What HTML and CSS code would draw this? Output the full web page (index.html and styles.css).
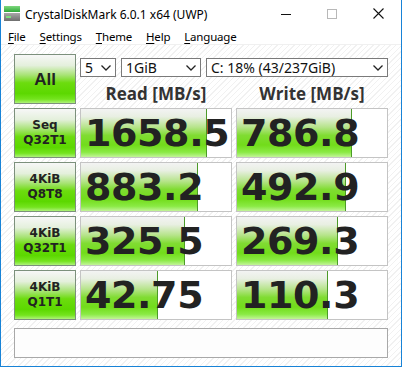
FILE: index.html
```html
<!DOCTYPE html>
<html>
<head>
<meta charset="utf-8">
<link rel="stylesheet" href="styles.css">
</head>
<body>
<div class="window">
  <div class="titlebar">
    <svg class="app-icon" width="16" height="16" viewBox="0 0 16 16">
      <defs>
        <linearGradient id="gtop" x1="0" y1="0" x2="0" y2="1">
          <stop offset="0" stop-color="#7ed87e"/>
          <stop offset="1" stop-color="#2fa83a"/>
        </linearGradient>
        <linearGradient id="gbot" x1="0" y1="0" x2="0" y2="1">
          <stop offset="0" stop-color="#a8a8a8"/>
          <stop offset="1" stop-color="#6e6e6e"/>
        </linearGradient>
      </defs>
      <rect x="0" y="0" width="16" height="6" fill="url(#gtop)"/>
      <rect x="0" y="7" width="16" height="8" fill="url(#gbot)"/>
      <rect x="2" y="10" width="5" height="2" fill="#7ee07e"/>
    </svg>
    <span class="title">CrystalDiskMark 6.0.1 x64 (UWP)</span>
    <div class="caption">
      <div class="cap-btn"><svg width="10" height="10" viewBox="0 0 10 10"><line x1="0" y1="5.5" x2="10" y2="5.5" stroke="#111" stroke-width="1"/></svg></div>
      <div class="cap-btn"><svg width="10" height="10" viewBox="0 0 10 10"><rect x="0.5" y="0.5" width="9" height="9" fill="none" stroke="#b8b8b8" stroke-width="1"/></svg></div>
      <div class="cap-btn"><svg width="11" height="11" viewBox="0 0 11 11"><path d="M0.5 0.5 L10.5 10.5 M10.5 0.5 L0.5 10.5" stroke="#111" stroke-width="1.1"/></svg></div>
    </div>
  </div>
  <div class="menubar">
    <span class="menu"><u>F</u>ile</span>
    <span class="menu"><u>S</u>ettings</span>
    <span class="menu"><u>T</u>heme</span>
    <span class="menu"><u>H</u>elp</span>
    <span class="menu"><u>L</u>anguage</span>
  </div>
  <div class="client">
    <div class="grid">
      <div class="btn btn-all">All</div>
      <div class="top">
        <div class="selects">
          <div class="sel sel-count"><span>5</span><svg class="chev" width="10" height="6" viewBox="0 0 10 6"><polyline points="0.5,0.5 5,5 9.5,0.5" fill="none" stroke="#222" stroke-width="1.3"/></svg></div>
          <div class="sel sel-size"><span>1GiB</span><svg class="chev" width="10" height="6" viewBox="0 0 10 6"><polyline points="0.5,0.5 5,5 9.5,0.5" fill="none" stroke="#222" stroke-width="1.3"/></svg></div>
          <div class="sel sel-drive"><span>C: 18% (43/237GiB)</span><svg class="chev" width="10" height="6" viewBox="0 0 10 6"><polyline points="0.5,0.5 5,5 9.5,0.5" fill="none" stroke="#222" stroke-width="1.3"/></svg></div>
        </div>
        <div class="heads">
          <div class="head">Read [MB/s]</div>
          <div class="head">Write [MB/s]</div>
        </div>
      </div>

      <div class="btn">Seq<br>Q32T1</div>
      <div class="val"><div class="fill" style="width:84%"></div><span class="num">1658.5</span></div>
      <div class="val"><div class="fill" style="width:76.7%"></div><span class="num">786.8</span></div>

      <div class="btn">4KiB<br>Q8T8</div>
      <div class="val"><div class="fill" style="width:78%"></div><span class="num">883.2</span></div>
      <div class="val"><div class="fill" style="width:72.7%"></div><span class="num">492.9</span></div>

      <div class="btn">4KiB<br>Q32T1</div>
      <div class="val"><div class="fill" style="width:69.3%"></div><span class="num">325.5</span></div>
      <div class="val"><div class="fill" style="width:67.3%"></div><span class="num">269.3</span></div>

      <div class="btn">4KiB<br>Q1T1</div>
      <div class="val"><div class="fill" style="width:51.3%"></div><span class="num">42.75</span></div>
      <div class="val"><div class="fill" style="width:60.7%"></div><span class="num">110.3</span></div>
    </div>
    <div class="status"></div>
  </div>
</div>
</body>
</html>
```

FILE: styles.css
```css
* { box-sizing: border-box; }
html, body { margin: 0; padding: 0; background: #fff; }
body { width: 402px; height: 367px; overflow: hidden; font-family: "Noto Sans", "Open Sans", sans-serif; }

.window {
  width: 402px;
  height: 367px;
  border: 1px solid #1883d7;
  border-top: none;
  display: flex;
  flex-direction: column;
  background: #fff;
}

.titlebar {
  height: 27px;
  display: flex;
  align-items: center;
  padding-left: 3px;
  flex: none;
}
.app-icon { flex: none; margin-top: 1px; }
.title {
  margin-left: 5px;
  font-size: 12px;
  color: #000;
  white-space: nowrap;
  margin-top: 1px;
}
.caption { margin-left: auto; display: flex; height: 27px; }
.cap-btn {
  width: 46px;
  height: 27px;
  display: flex;
  align-items: center;
  justify-content: center;
}

.menubar {
  height: 17px;
  display: flex;
  gap: 14px;
  padding-left: 7px;
  align-items: center;
  font-size: 11.5px;
  letter-spacing: -0.2px;
  color: #000;
  border-bottom: 1px solid #f0f0f0;
  flex: none;
  box-sizing: content-box;
}
.menu { white-space: nowrap; line-height: 15px; margin-top: 1px; }
.menu u { text-decoration-thickness: 1px; text-underline-offset: 2px; }

.client {
  flex: 1;
  padding: 9px 13px 0 13px;
  background: repeating-linear-gradient(135deg, #ffffff 0px, #ffffff 3px, #f1f1f1 3px, #f1f1f1 4px);
}

.grid {
  display: grid;
  grid-template-columns: 62px 152px 152px;
  grid-template-rows: repeat(5, 50px);
  column-gap: 4px;
  row-gap: 4px;
}

.btn {
  border: 1px solid #7c907c;
  background: linear-gradient(to bottom, #f7f7f7 0%, #e4f0dc 22%, #a7e374 42%, #6cdc0e 58%, #5cd800 80%, #74e41e 92%, #aef27a 100%);
  display: flex;
  align-items: center;
  justify-content: center;
  text-align: center;
  font-family: "DejaVu Sans", sans-serif;
  font-weight: bold;
  font-size: 12px;
  line-height: 15px;
  color: #222;
}
.btn-all {
  font-family: "Liberation Sans", Arial, sans-serif;
  font-size: 17px;
}

.top {
  grid-column: 2 / 4;
  display: flex;
  flex-direction: column;
}
.selects {
  display: flex;
  gap: 5px;
  margin-top: 4px;
  height: 19px;
}
.sel {
  height: 19px;
  border: 1px solid #7a7a7a;
  background: #fff;
  display: flex;
  align-items: center;
  padding-left: 4px;
  padding-right: 4px;
  font-size: 14px;
  color: #111;
  white-space: nowrap;
}
.sel span { line-height: 17px; }
.chev { margin-left: auto; flex: none; }
.sel-count { width: 36px; }
.sel-size { width: 80px; }
.sel-drive { width: 182px; }

.heads {
  display: grid;
  grid-template-columns: 152px 152px;
  column-gap: 4px;
  margin-top: 7px;
}
.head {
  text-align: center;
  font-family: "Open Sans", sans-serif;
  font-weight: bold;
  font-size: 17px;
  line-height: 20px;
  color: #333;
  white-space: nowrap;
}

.val {
  position: relative;
  border: 1px solid #c4c4c4;
  background: #fff;
  overflow: hidden;
}
.fill {
  position: absolute;
  left: 0;
  top: 0;
  bottom: 0;
  border-right: 1px solid #4c9a28;
  background: linear-gradient(to bottom, #f3f3f3 0%, #e8efe2 16%, #b6e48a 38%, #80dc32 55%, #72dc1a 75%, #8aea44 90%, #c2f498 100%);
}
.num {
  position: relative;
  display: block;
  padding-left: 4px;
  font-family: "DejaVu Sans", sans-serif;
  font-weight: bold;
  font-size: 38px;
  letter-spacing: -0.4px;
  line-height: 48px;
  color: #222;
  white-space: nowrap;
}

.status {
  margin-top: 8px;
  width: 374px;
  height: 30px;
  border: 1px solid #a8a8a8;
  background: #fdfdfd;
}
```
